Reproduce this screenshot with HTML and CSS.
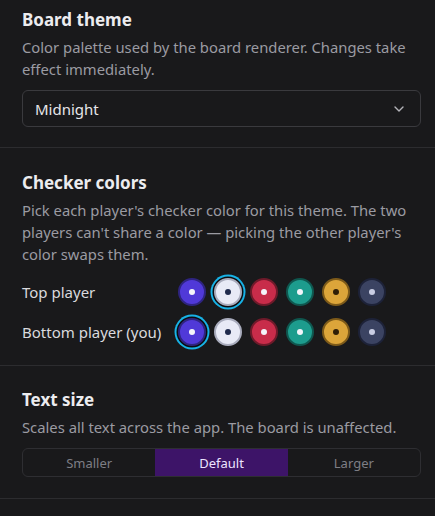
FILE: index.html
```html
<!DOCTYPE html>
<html>
<head>
<meta charset="utf-8">
<link rel="stylesheet" href="styles.css">
</head>
<body>
<section class="sec sec-first">
  <h2 class="title">Board theme</h2>
  <p class="desc">Color palette used by the board renderer. Changes take effect immediately.</p>
  <div class="select">
    <span>Midnight</span>
    <svg class="chev" width="12" height="8" viewBox="0 0 12 8"><path d="M2 2 L6 6 L10 2" fill="none" stroke="#b4b4ba" stroke-width="1.4" stroke-linecap="round" stroke-linejoin="round"/></svg>
  </div>
</section>
<section class="sec sec-checkers">
  <h2 class="title">Checker colors</h2>
  <p class="desc">Pick each player's checker color for this theme. The two players can't share a color — picking the other player's color swaps them.</p>
  <div class="rows">
    <div class="row">
      <span class="label">Top player</span>
      <div class="swatches">
        <span class="sw c-purple"></span>
        <span class="sw c-white sel"></span>
        <span class="sw c-red"></span>
        <span class="sw c-teal"></span>
        <span class="sw c-gold"></span>
        <span class="sw c-slate"></span>
      </div>
    </div>
    <div class="row">
      <span class="label">Bottom player (you)</span>
      <div class="swatches">
        <span class="sw c-purple sel"></span>
        <span class="sw c-white"></span>
        <span class="sw c-red"></span>
        <span class="sw c-teal"></span>
        <span class="sw c-gold"></span>
        <span class="sw c-slate"></span>
      </div>
    </div>
  </div>
</section>
<section class="sec sec-text">
  <h2 class="title">Text size</h2>
  <p class="desc">Scales all text across the app. The board is unaffected.</p>
  <div class="seg">
    <span class="seg-item">Smaller</span>
    <span class="seg-item active">Default</span>
    <span class="seg-item">Larger</span>
  </div>
</section>
</body>
</html>
```
FILE: styles.css
```css
html, body {
  margin: 0;
  padding: 0;
  background: #19191b;
}
body {
  font-family: "Noto Sans", "Open Sans", sans-serif;
  color: #e6e6ea;
  height: 516px;
  overflow: hidden;
}
.sec {
  padding: 23px 14px 19px 22px;
  border-bottom: 1px solid #2c2c2f;
}
.sec-first {
  padding-top: 8px;
  padding-bottom: 20px;
}
.sec-checkers {
  padding-bottom: 15px;
}
.sec-text {
  padding-top: 22px;
  padding-bottom: 21px;
}
.title {
  margin: 0 0 4px;
  font-size: 17px;
  line-height: 24px;
  font-weight: 700;
  color: #ececef;
}
.desc {
  margin: 0 0 10px;
  font-size: 14.8px;
  line-height: 22px;
  color: #9b9ba2;
}
.select {
  height: 37px;
  box-sizing: border-box;
  border: 1px solid #3a3a3e;
  border-radius: 6px;
  display: flex;
  align-items: center;
  justify-content: space-between;
  padding: 0 15px 0 12px;
  font-size: 15px;
  color: #e6e6ea;
}
.chev { display: block; }
.rows {
  display: flex;
  flex-direction: column;
  gap: 4px;
  margin-top: -1px;
}
.row {
  display: flex;
  align-items: center;
  height: 36px;
}
.label {
  width: 156px;
  font-size: 15px;
  color: #dadade;
}
.swatches {
  display: flex;
  gap: 8px;
  align-items: center;
}
.sw {
  width: 28px;
  height: 28px;
  box-sizing: border-box;
  border-radius: 50%;
  border: 2.5px solid;
  display: flex;
  align-items: center;
  justify-content: center;
}
.sw::after {
  content: "";
  width: 6px;
  height: 6px;
  border-radius: 50%;
  background: #f4f4fa;
}
.sw.sel {
  box-shadow: 0 0 0 1.5px #0d0d10, 0 0 0 3.5px #17b2e6;
}
.c-purple { background: #5039d8; border-color: #2e2480; }
.c-white { background: #e8eaf6; border-color: #a9acbd; }
.c-white::after { background: #1f2a4c; }
.c-red { background: #c82c4a; border-color: #6e1a2a; }
.c-teal { background: #1d9c8d; border-color: #0f574f; }
.c-gold { background: #dca53a; border-color: #7d5a19; }
.c-gold::after { background: #2f1e07; }
.c-slate { background: #3b4362; border-color: #1d2238; }
.c-slate::after { background: #c9cde3; }
.seg {
  display: flex;
  height: 27px;
  border: 1px solid #2e2e32;
  border-radius: 6px;
  overflow: hidden;
}
.seg-item {
  flex: 1;
  display: flex;
  align-items: center;
  justify-content: center;
  font-size: 13px;
  color: #7e7e85;
}
.seg-item.active {
  background: #3d1468;
  color: #ece4ff;
}
```
